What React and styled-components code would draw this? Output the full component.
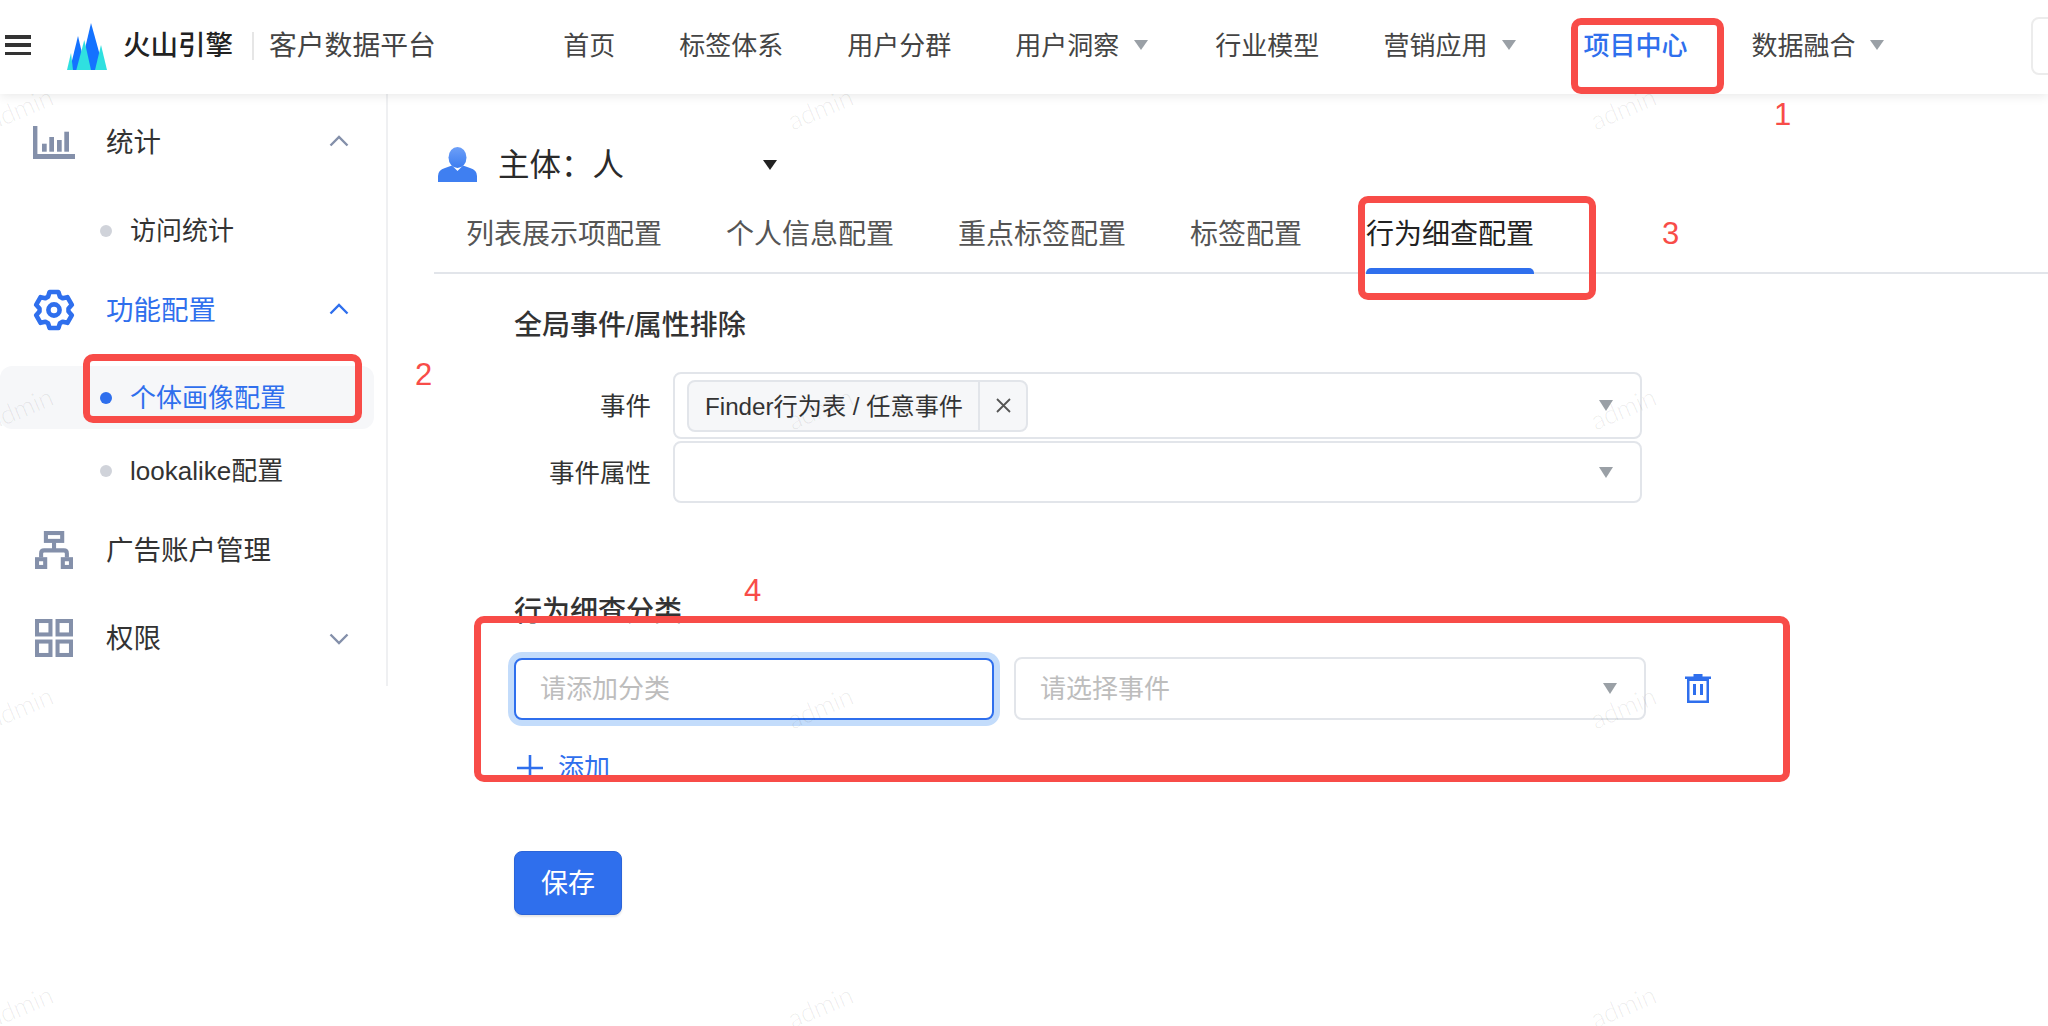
import React from "react";
import styled, { createGlobalStyle } from "styled-components";

const BLUE = "#2f6fed";
const SLATE = "#8490aa";
const LINE = "#e2e5ea";
const RED = "#f84c48";

const Global = createGlobalStyle`
  html, body { margin: 0; padding: 0; background: #fff; }
  body { font-family: "Liberation Sans", "Noto Sans CJK SC", sans-serif; color: #333; }
  * { box-sizing: border-box; }
`;

const Page = styled.div`
  position: relative;
  width: 2048px;
  height: 1026px;
  overflow: hidden;
  background: #fff;
`;

const Header = styled.header`
  position: relative;
  z-index: 2;
  display: flex;
  align-items: center;
  height: 94px;
  padding-left: 5px;
  padding-bottom: 2px;
  background: #fff;
  box-shadow: 0 2px 10px rgba(0, 0, 0, 0.09);
`;

const Burger = styled.div`
  display: flex;
  flex-direction: column;
  justify-content: space-between;
  width: 26px;
  height: 20px;
  margin-top: -2px;
  span { display: block; height: 3.5px; background: #333; }
`;

const Logo = styled.svg`
  width: 40px;
  height: 47px;
  margin-left: 36px;
  flex: none;
`;

const Brand = styled.span`
  margin-left: 16px;
  font-size: 27.5px;
  line-height: 40px;
  font-weight: 500;
  color: #222;
  white-space: nowrap;
`;

const BrandDivider = styled.i`
  width: 2px;
  height: 28px;
  margin-left: 19px;
  background: #e6e6e6;
`;

const Product = styled.span`
  margin-left: 15px;
  font-size: 27.8px;
  line-height: 40px;
  color: #444;
  white-space: nowrap;
`;

const Nav = styled.nav`
  display: flex;
  align-items: center;
  gap: 64px;
  margin-left: 127.5px;
`;

const NavItem = styled.a`
  display: flex;
  align-items: center;
  font-size: 26px;
  line-height: 40px;
  white-space: nowrap;
  color: ${(p) => (p.$active ? BLUE : "#444")};
  font-weight: ${(p) => (p.$active ? 500 : 400)};
`;

const Caret = styled.i`
  display: block;
  flex: none;
  width: 0;
  height: 0;
  border-left: ${(p) => p.$w / 2}px solid transparent;
  border-right: ${(p) => p.$w / 2}px solid transparent;
  border-top: ${(p) => p.$h}px solid ${(p) => p.$color || "#9aa0a6"};
`;

const NavCaret = styled(Caret)`
  margin: -2px 3px 0 15px;
`;

const HeaderBox = styled.div`
  flex: none;
  width: 30px;
  height: 58px;
  margin-left: auto;
  margin-right: -13px;
  border: 2px solid #ececec;
  border-radius: 8px;
`;

const Body = styled.div`
  display: flex;
  align-items: flex-start;
`;

const Sidebar = styled.aside`
  flex: none;
  width: 388px;
  height: 592px;
  padding-top: 18px;
  border-right: 2px solid #eff0f2;
`;

const ParentRow = styled.div`
  display: flex;
  align-items: center;
  height: 60px;
  margin-top: ${(p) => p.$top || 0}px;
  padding: 0 37px 0 33px;
  font-size: 27.5px;
  color: ${(p) => (p.$active ? BLUE : "#333")};
`;

const IconSlot = styled.span`
  display: flex;
  align-items: center;
  justify-content: center;
  flex: none;
  width: 42px;
  margin-right: 31px;
`;

const RowLabel = styled.span`
  margin-top: -4px;
  white-space: nowrap;
`;

const Chevron = styled.svg`
  width: 20px;
  height: 12px;
  margin-left: auto;
  margin-top: ${(p) => (p.$up ? -2 : 2)}px;
`;

const ChildRow = styled.div`
  display: flex;
  align-items: center;
  gap: 18px;
  width: 374px;
  height: 63px;
  margin-top: ${(p) => p.$top || 0}px;
  padding-left: 100px;
  font-size: 26px;
  border-radius: 12px;
  background: ${(p) => (p.$active ? "#f6f7f9" : "transparent")};
  color: ${(p) => (p.$active ? BLUE : "#333")};
`;

const Dot = styled.i`
  width: 12px;
  height: 12px;
  border-radius: 50%;
  background: ${(p) => (p.$active ? BLUE : "#d0d3da")};
`;

const Main = styled.main`
  flex: 1;
  min-width: 0;
  padding: 53px 0 0 46px;
`;

const SubjectRow = styled.div`
  display: flex;
  align-items: center;
  height: 35px;
  padding-left: 4px;
`;

const PersonIcon = styled.svg`
  width: 39px;
  height: 35px;
  flex: none;
`;

const SubjectText = styled.div`
  width: 265px;
  margin-left: 21px;
  margin-top: -5px;
  font-size: 31.5px;
  line-height: 40px;
  color: #2a2a2a;
  font-family: "Noto Sans CJK SC", sans-serif;
`;

const Tabs = styled.div`
  display: flex;
  gap: 64px;
  height: 92px;
  padding: 33px 0 0 32px;
  border-bottom: 2px solid ${LINE};
`;

const Tab = styled.div`
  position: relative;
  height: 57px;
  font-size: 28px;
  line-height: 40px;
  white-space: nowrap;
  color: ${(p) => (p.$active ? "#222" : "#555")};
  &::after {
    content: "";
    display: ${(p) => (p.$active ? "block" : "none")};
    position: absolute;
    left: 0;
    right: 0;
    bottom: -2px;
    height: 6px;
    border-radius: 5px 5px 0 0;
    background: ${BLUE};
  }
`;

const Form = styled.section`
  padding-left: 80px;
`;

const SectionTitle = styled.h3`
  margin: ${(p) => p.$top}px 0 0;
  font-size: 28px;
  line-height: 40px;
  font-weight: 500;
  color: #333;
`;

const FieldRow = styled.div`
  display: flex;
  align-items: center;
  margin-top: ${(p) => p.$top}px;
`;

const FieldLabel = styled.label`
  flex: none;
  width: 137px;
  margin-right: 22px;
  margin-top: -4px;
  text-align: right;
  font-size: 25.5px;
  color: #333;
`;

const SelectBox = styled.div`
  display: flex;
  align-items: center;
  flex: none;
  width: ${(p) => p.$w}px;
  height: ${(p) => p.$h}px;
  margin-left: ${(p) => p.$ml || 0}px;
  padding: 0 ${(p) => p.$pr || 27}px 0 ${(p) => p.$pl || 12}px;
  border: 2px solid ${LINE};
  border-radius: 8px;
  background: #fff;
`;

const SelectCaret = styled(Caret)`
  margin-left: auto;
`;

const TagChip = styled.div`
  display: flex;
  align-items: stretch;
  width: 341px;
  height: 52px;
  border: 2px solid ${LINE};
  border-radius: 8px;
  background: #f6f7f9;
`;

const TagLabel = styled.span`
  display: flex;
  align-items: center;
  width: 291px;
  padding: 0 0 2px 16px;
  border-right: 2px solid ${LINE};
  font-size: 24.2px;
  white-space: nowrap;
  color: #333;
`;

const TagClose = styled.span`
  display: flex;
  flex: 1;
  align-items: center;
  justify-content: center;
`;

const CategoryRow = styled.div`
  display: flex;
  align-items: center;
  margin-top: 25px;
`;

const CategoryInput = styled.input`
  flex: none;
  width: 480px;
  height: 62px;
  padding: 1px 0 0 24px;
  border: 2px solid ${BLUE};
  border-radius: 8px;
  outline: none;
  box-shadow: 0 0 0 6px #c3dcfb;
  font: inherit;
  font-size: 26px;
  color: #333;
  &::placeholder { color: #bdbdbd; opacity: 1; }
`;

const Placeholder = styled.span`
  margin-top: -5px;
  font-size: 26px;
  color: #bdbdbd;
`;

const TrashIcon = styled.svg`
  width: 26px;
  height: 29px;
  margin-left: 39px;
  flex: none;
`;

const AddRow = styled.div`
  display: flex;
  align-items: center;
  gap: 15px;
  height: 40px;
  margin: 28px 0 0 3px;
  font-size: 26px;
  color: ${BLUE};
`;

const AddLabel = styled.span`
  margin-top: -6px;
`;

const SaveButton = styled.button`
  display: block;
  width: 108px;
  height: 64px;
  margin-top: 63px;
  padding: 0 0 4px;
  border: 1px solid #2b64d8;
  border-radius: 8px;
  background: ${BLUE};
  box-shadow: 0 2px 2px rgba(0, 0, 0, 0.1);
  font: inherit;
  font-size: 27px;
  color: #fff;
`;

const RedBox = styled.div`
  position: absolute;
  z-index: 3;
  left: ${(p) => p.$x}px;
  top: ${(p) => p.$y}px;
  width: ${(p) => p.$w}px;
  height: ${(p) => p.$h}px;
  border: 7.5px solid ${RED};
  border-radius: 10px;
  pointer-events: none;
`;

const RedDigit = styled.span`
  position: absolute;
  z-index: 3;
  left: ${(p) => p.$x}px;
  top: ${(p) => p.$y}px;
  font-size: 31px;
  line-height: 31px;
  color: ${RED};
`;

const Watermark = styled.span`
  position: absolute;
  z-index: 1;
  left: ${(p) => p.$x}px;
  top: ${(p) => p.$y}px;
  transform: translate(-50%, -50%) rotate(-23deg);
  font-family: "Lato", sans-serif;
  font-weight: 300;
  font-size: 26px;
  color: rgba(0, 0, 0, 0.08);
  pointer-events: none;
`;

const gearPath = (() => {
  const pts = [];
  for (let i = 0; i < 6; i++) {
    const a = (i * Math.PI) / 3 - Math.PI / 2;
    [[-0.42, 14.6], [-0.24, 18.6], [0.24, 18.6], [0.42, 14.6]].forEach(([d, r]) => {
      pts.push(`${(21 + r * Math.cos(a + d)).toFixed(2)} ${(21 + r * Math.sin(a + d)).toFixed(2)}`);
    });
  }
  return "M" + pts.join("L") + "Z";
})();

const ChevronIcon = ({ up, color }) => (
  <Chevron viewBox="0 0 20 12" $up={up}>
    <polyline
      points={up ? "1.5,10.5 10,2 18.5,10.5" : "1.5,1.5 10,10 18.5,1.5"}
      fill="none"
      stroke={color}
      strokeWidth="2.4"
    />
  </Chevron>
);

const StatsIcon = () => (
  <svg width="42" height="33" viewBox="0 0 42 33" fill={SLATE}>
    <path d="M0 0h4.4v28H42v5H0z" />
    <rect x="9" y="17.7" width="4.7" height="8" />
    <rect x="16.3" y="11" width="4.7" height="14.7" />
    <rect x="24" y="14" width="4.7" height="11.7" />
    <rect x="31.3" y="5.7" width="4.7" height="20" />
  </svg>
);

const GearIcon = () => (
  <svg width="42" height="42" viewBox="0 0 42 42" fill="none" stroke={BLUE} strokeWidth="4.6" strokeLinejoin="round">
    <path d={gearPath} />
    <circle cx="21" cy="21" r="5.6" />
  </svg>
);

const OrgIcon = () => (
  <svg width="38" height="38" viewBox="0 0 37.3 37.3" fill="none" stroke={SLATE} strokeWidth="4">
    <rect x="10.7" y="2" width="16" height="7.7" />
    <path d="M18.7 11v8" />
    <path d="M6 26v-4q0-3 3-3h19.3q3 0 3 3v4" />
    <rect x="2" y="27.7" width="8" height="7.6" />
    <rect x="27.3" y="27.7" width="8" height="7.6" />
  </svg>
);

const GridIcon = () => (
  <svg width="38" height="38" viewBox="0 0 37.6 37.6" fill="none" stroke={SLATE} strokeWidth="4">
    <rect x="2" y="2" width="13.3" height="13.3" />
    <rect x="22.3" y="2" width="13.3" height="13.3" />
    <rect x="2" y="22.3" width="13.3" height="13.3" />
    <rect x="22.3" y="22.3" width="13.3" height="13.3" />
  </svg>
);

const navItems = [
  ["首页"],
  ["标签体系"],
  ["用户分群"],
  ["用户洞察", "caret"],
  ["行业模型"],
  ["营销应用", "caret"],
  ["项目中心", "active"],
  ["数据融合", "caret"],
];

const tabs = ["列表展示项配置", "个人信息配置", "重点标签配置", "标签配置", "行为细查配置"];
const wmRows = [108, 408, 707, 1006];
const wmCols = [20, 820, 1623];

export default function App() {
  return (
    <Page>
      <Global />
      <Header>
        <Burger><span /><span /><span /></Burger>
        <Logo viewBox="0 0 40 47">
          <polygon points="24,0 13,47 37,47" fill="#1472ff" />
          <polygon points="11,13 2.7,47 19,47" fill="#1472ff" />
          <polygon points="4,30 0,47 6,47" fill="#2fe0e0" />
          <polygon points="34,22 28,47 40,47" fill="#2fe0e0" />
          <polygon points="17.3,17 9.3,47 24,47" fill="#2fe0e0" />
        </Logo>
        <Brand>火山引擎</Brand>
        <BrandDivider />
        <Product>客户数据平台</Product>
        <Nav>
          {navItems.map(([label, kind]) => (
            <NavItem key={label} $active={kind === "active"}>
              {label}
              {kind === "caret" && <NavCaret $w={14} $h={10} />}
            </NavItem>
          ))}
        </Nav>
        <HeaderBox />
      </Header>

      <Body>
        <Sidebar>
          <ParentRow>
            <IconSlot><StatsIcon /></IconSlot>
            <RowLabel>统计</RowLabel>
            <ChevronIcon up color={SLATE} />
          </ParentRow>
          <ChildRow $top={27}><Dot /><RowLabel>访问统计</RowLabel></ChildRow>
          <ParentRow $top={18} $active>
            <IconSlot><GearIcon /></IconSlot>
            <RowLabel>功能配置</RowLabel>
            <ChevronIcon up color={BLUE} />
          </ParentRow>
          <ChildRow $top={26} $active><Dot $active /><RowLabel>个体画像配置</RowLabel></ChildRow>
          <ChildRow $top={10}><Dot /><RowLabel>lookalike配置</RowLabel></ChildRow>
          <ParentRow $top={18}>
            <IconSlot><OrgIcon /></IconSlot>
            <RowLabel>广告账户管理</RowLabel>
          </ParentRow>
          <ParentRow $top={28}>
            <IconSlot><GridIcon /></IconSlot>
            <RowLabel>权限</RowLabel>
            <ChevronIcon color={SLATE} />
          </ParentRow>
        </Sidebar>

        <Main>
          <SubjectRow>
            <PersonIcon viewBox="0 0 39 35">
              <defs>
                <linearGradient id="person" x1="0" y1="0" x2="0" y2="1">
                  <stop offset="0" stopColor="#6d9ff8" />
                  <stop offset="1" stopColor="#3c7df0" />
                </linearGradient>
              </defs>
              <ellipse cx="19.5" cy="10.5" rx="9" ry="10.5" fill="url(#person)" />
              <path d="M0 35v-6q0-6 7-8l7-2.5 5.5 5.5 5.5-5.5 7 2.5q7 2 7 8v6z" fill="#3f7ff1" />
            </PersonIcon>
            <SubjectText>主体：人</SubjectText>
            <Caret $w={14} $h={10} $color="#222" />
          </SubjectRow>

          <Tabs>
            {tabs.map((t, i) => (
              <Tab key={t} $active={i === tabs.length - 1}>{t}</Tab>
            ))}
          </Tabs>

          <Form>
            <SectionTitle $top={32}>全局事件/属性排除</SectionTitle>
            <FieldRow $top={26}>
              <FieldLabel>事件</FieldLabel>
              <SelectBox $w={969} $h={67}>
                <TagChip>
                  <TagLabel>Finder行为表 / 任意事件</TagLabel>
                  <TagClose>
                    <svg width="15" height="15" viewBox="0 0 15 15" stroke="#555" strokeWidth="1.8">
                      <path d="M1 1l13 13M14 1L1 14" />
                    </svg>
                  </TagClose>
                </TagChip>
                <SelectCaret $w={15} $h={11} />
              </SelectBox>
            </FieldRow>
            <FieldRow $top={2}>
              <FieldLabel>事件属性</FieldLabel>
              <SelectBox $w={969} $h={62}>
                <SelectCaret $w={15} $h={11} />
              </SelectBox>
            </FieldRow>

            <SectionTitle $top={89}>行为细查分类</SectionTitle>
            <CategoryRow>
              <CategoryInput placeholder="请添加分类" readOnly />
              <SelectBox $w={632} $h={63} $ml={20} $pl={24} $pr={27}>
                <Placeholder>请选择事件</Placeholder>
                <SelectCaret $w={15} $h={11} />
              </SelectBox>
              <TrashIcon viewBox="0 0 26 29" fill={BLUE}>
                <path d="M8.5 0h9v2.5H26V5H0V2.5h8.5z" />
                <path d="M2 5h22v24H2zM4.5 7v19.5h17V7z" fillRule="evenodd" />
                <rect x="8" y="10" width="3" height="11" />
                <rect x="15" y="10" width="3" height="11" />
              </TrashIcon>
            </CategoryRow>
            <AddRow>
              <svg width="26" height="26" viewBox="0 0 26 26" stroke={BLUE} strokeWidth="2.6">
                <path d="M13 0v26M0 13h26" />
              </svg>
              <AddLabel>添加</AddLabel>
            </AddRow>
            <SaveButton>保存</SaveButton>
          </Form>
        </Main>
      </Body>

      <RedBox $x={1571} $y={18} $w={153} $h={76} />
      <RedBox $x={83} $y={354} $w={279} $h={69} />
      <RedBox $x={1358} $y={196} $w={238} $h={104} />
      <RedBox $x={474} $y={616} $w={1316} $h={166} />
      <RedDigit $x={1774} $y={99}>1</RedDigit>
      <RedDigit $x={415} $y={359}>2</RedDigit>
      <RedDigit $x={1662} $y={218}>3</RedDigit>
      <RedDigit $x={744} $y={575}>4</RedDigit>

      {wmRows.map((y) =>
        wmCols.map((x) => <Watermark key={`${x}-${y}`} $x={x} $y={y}>admin</Watermark>)
      )}
    </Page>
  );
}
